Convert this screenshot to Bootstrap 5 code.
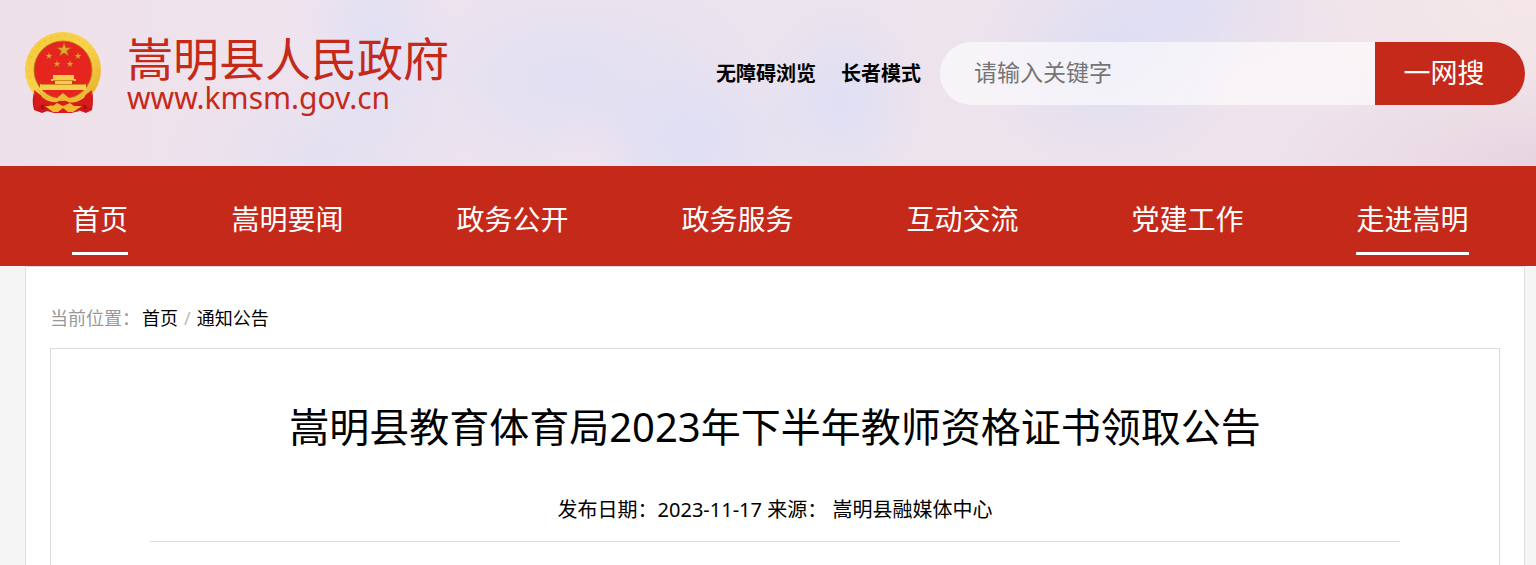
<!DOCTYPE html>
<html lang="zh-CN">
<head>
<meta charset="utf-8">
<meta name="viewport" content="width=device-width, initial-scale=1">
<title>嵩明县人民政府</title>
<link href="https://cdn.jsdelivr.net/npm/bootstrap@5.3.0/dist/css/bootstrap.min.css" rel="stylesheet">
<style>
  :root { --gov-red: #c5291a; --edge: #dcdcdc; }
  body { font-family: "Noto Sans", "Noto Sans CJK SC", sans-serif; color: #000; background: #f5f5f5; }
  a { color: inherit; text-decoration: none; }
  .page-gutter { padding-left: 25px; padding-right: 11px; }
  .site-header {
    min-height: 166px;
    padding-bottom: 20px;
    background:
      radial-gradient(ellipse 80px 130px at 375px 40px, #dedff5cc 0, #dedff500 100%),
      radial-gradient(ellipse 190px 110px at 570px 80px, #dfdff4cc 0, #dfdff400 100%),
      radial-gradient(ellipse 50px 60px at 585px 166px, #f3e5ee 0, #f3e5ee00 100%),
      radial-gradient(ellipse 120px 90px at 690px 140px, #dcddf6cc 0, #dcddf600 100%),
      radial-gradient(ellipse 80px 90px at 840px 100px, #dcdef7cc 0, #dcdef700 100%),
      radial-gradient(ellipse 130px 110px at 1110px 60px, #dadcf5cc 0, #dadcf500 100%),
      radial-gradient(ellipse 130px 70px at 1190px 10px, #dedef4cc 0, #dedef400 100%),
      radial-gradient(ellipse 150px 80px at 320px 150px, #e2dff1cc 0, #e2dff100 100%),
      radial-gradient(ellipse 260px 120px at 100% 0, #f5e7e8 0, #f5e7e800 100%),
      radial-gradient(ellipse 260px 100px at 100% 100%, #e7d5df 0, #e7d5df00 100%),
      linear-gradient(90deg, #eee0e9, #eee4ee 20%, #ebe3ee 50%, #eee3ec 80%, #efe2e9);
  }
  .emblem { width: 78px; height: 84px; }
  .brand-link { color: var(--gov-red); gap: 24px; padding-top: 1px; }
  .brand-name { font-size: 46px; line-height: 49px; }
  .brand-url { font-size: 30px; line-height: 30px; }
  .tool-links { font-size: 20px; line-height: 30px; gap: 25px; margin-right: 19px; padding-top: 2px; }
  .search-box { width: 585px; height: 63px; }
  .search-box .form-control {
    border: 0; border-radius: 32px 0 0 32px; background: #ffffff99;
    font-size: 23px; padding: 0 34px 2px;
  }
  .search-box .form-control::placeholder { color: #757575; }
  .search-box .btn {
    width: 150px; border: 0; border-radius: 0 32px 32px 0; padding: 0 12px 0 0;
    background: var(--gov-red); color: #fff; font-size: 27px; line-height: 40px;
  }
  .main-nav { background: var(--gov-red); height: 100px; }
  .main-nav .nav-item { flex: 3 1 0; }
  .main-nav .nav-item:first-child { flex-grow: 2; }
  .main-nav .nav-link {
    color: #fff; font-size: 28px; line-height: 42px; padding: 12px 0;
    margin-top: 20px; border-bottom: 3px solid transparent;
  }
  .main-nav .nav-link.active { border-color: #fff; }
  .page-body { margin: 0 11px 0 25px; padding: 36px 24px 0; border: 1px solid var(--edge); border-bottom: 0; background: #fff; }
  .crumbs { font-size: 18px; line-height: 30px; margin-bottom: 15px; }
  .crumb-label { color: #999; margin-right: 2px; }
  .crumb-sep { color: #bbb; margin: 0 6px; }
  .notice { border: 1px solid var(--edge); border-bottom: 0; padding: 48px 99px 23px; }
  .notice-title { font-size: 40px; line-height: 60px; margin-bottom: 38px; font-weight: 400; }
  .notice-meta { font-size: 20px; line-height: 30px; padding-bottom: 16px; border-bottom: 1px solid var(--edge); }
</style>
</head>
<body>
<header class="site-header page-gutter d-flex align-items-center justify-content-between">
  <a class="brand-link d-flex align-items-center" href="#">
    <svg class="emblem" viewBox="0 0 78 84" aria-hidden="true">
      <defs>
        <linearGradient id="gold" x1="0" y1="0" x2="1" y2="1"><stop offset="0" stop-color="#f3c83a"/><stop offset=".5" stop-color="#fbd34b"/><stop offset="1" stop-color="#e3aa28"/></linearGradient>
        <path id="star" d="M0-10 2.3-3.1 9.5-3.1 3.7 1.2 5.9 8.1 0 3.8-5.9 8.1-3.7 1.2-9.5-3.1-2.3-3.1Z"/>
      </defs>
      <path d="M10 55Q6 69 9 78L17 81 25 78 33 81H45L53 78 61 81 67 78Q69 68 67 55Z" fill="#cf1519"/>
      <path d="M14 64 18 77M21 67 24 76M62 63 60 77M55 67 53 76" stroke="#99110f" stroke-width="2"/>
      <circle cx="38" cy="38" r="38" fill="url(#gold)"/>
      <circle cx="38" cy="38" r="29" fill="#e6251f" stroke="#b87b1b" stroke-width="1"/>
      <circle cx="38" cy="38" r="34" fill="none" stroke="#e8b938" stroke-width="1" stroke-dasharray="2 5"/>
      <g fill="#dfab32" stroke="#ad7219" stroke-width=".7">
        <use href="#star" transform="translate(39 18) scale(.72)"/>
        <use href="#star" transform="translate(24 24) scale(.36)"/>
        <use href="#star" transform="translate(53 24) scale(.36)"/>
        <use href="#star" transform="translate(32 32) scale(.36)"/>
        <use href="#star" transform="translate(45 32) scale(.36)"/>
      </g>
      <path d="M28 43H49V47H51V49H47V52H61V58H15V52H30V49H26V47H28Z" fill="#f7ce4b"/>
      <path d="M16 52.500H60M28 48.500H49" stroke="#cc8926"/>
      <path d="M9 58Q21 69 38 69T67 58L66 76 58 72 48 75 55 79 46 81H29L22 79 29 74 19 72 10 76Z" fill="#d91c1b"/>
      <path d="M12 56Q22 66 32 66L38 61 44 66Q54 66 64 56L59 66Q50 72 43 70L38 67 32 70Q23 71 17 65Z" fill="#edb936"/>
      <path d="M32 71 38 74 45 71 49 74H57L48 80H43L38 76 33 80H28L20 74 28 74Z" fill="#efba31"/>
    </svg>
    <span class="d-flex flex-column">
      <span class="brand-name">嵩明县人民政府</span>
      <span class="brand-url">www.kmsm.gov.cn</span>
    </span>
  </a>
  <div class="d-flex align-items-center">
    <div class="tool-links d-flex fw-bold">
      <a href="#">无障碍浏览</a>
      <a href="#">长者模式</a>
    </div>
    <form class="search-box input-group flex-nowrap" role="search">
      <input class="form-control" type="search" placeholder="请输入关键字" aria-label="请输入关键字">
      <button class="btn" type="button">一网搜</button>
    </form>
  </div>
</header>
<nav class="main-nav page-gutter">
  <ul class="nav flex-nowrap">
    <li class="nav-item d-flex justify-content-center"><a class="nav-link active" href="#">首页</a></li>
    <li class="nav-item d-flex justify-content-center"><a class="nav-link" href="#">嵩明要闻</a></li>
    <li class="nav-item d-flex justify-content-center"><a class="nav-link" href="#">政务公开</a></li>
    <li class="nav-item d-flex justify-content-center"><a class="nav-link" href="#">政务服务</a></li>
    <li class="nav-item d-flex justify-content-center"><a class="nav-link" href="#">互动交流</a></li>
    <li class="nav-item d-flex justify-content-center"><a class="nav-link" href="#">党建工作</a></li>
    <li class="nav-item d-flex justify-content-center"><a class="nav-link active" href="#">走进嵩明</a></li>
  </ul>
</nav>
<main class="page-body">
  <nav class="crumbs d-flex" aria-label="当前位置">
    <span class="crumb-label">当前位置：</span><a href="#">首页</a><span class="crumb-sep">/</span><a href="#">通知公告</a>
  </nav>
  <article class="notice text-center">
    <h1 class="notice-title">嵩明县教育体育局2023年下半年教师资格证书领取公告</h1>
    <div class="notice-meta">发布日期：2023-11-17 来源： 嵩明县融媒体中心</div>
  </article>
</main>
<script src="https://cdn.jsdelivr.net/npm/bootstrap@5.3.0/dist/js/bootstrap.bundle.min.js"></script>
</body>
</html>
